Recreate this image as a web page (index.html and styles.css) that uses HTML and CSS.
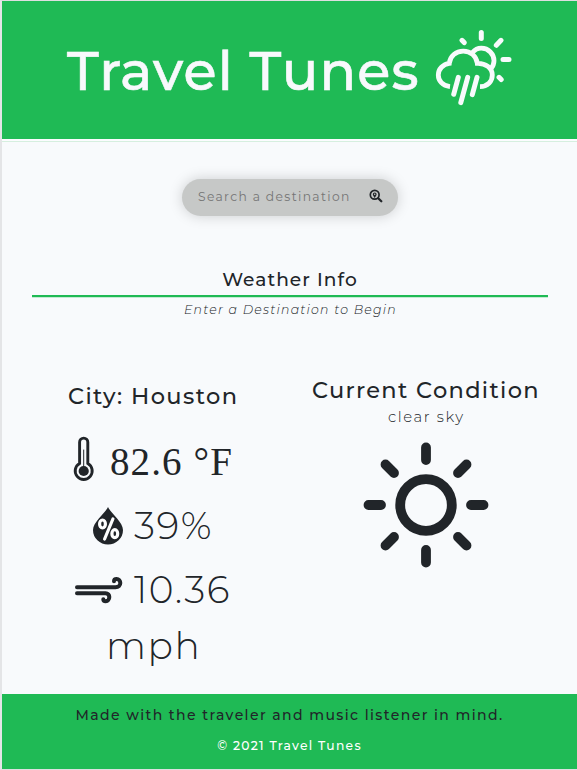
FILE: index.html
```
<!DOCTYPE html>
<html lang="en">
<head>
<meta charset="utf-8">
<title>Travel Tunes</title>
<link rel="stylesheet" href="styles.css">
</head>
<body>
<div class="page">
  <header class="header">
    <h1 class="title">Travel Tunes</h1>
    <svg class="logo" viewBox="0 0 80 80">
      <path d="M16 58.6C8.500 57.800 4.300 52.800 4.300 47C4.300 41 9 36.200 15.300 35.300C16 28 22 23.200 29.300 23.200C36.500 23.200 42.500 28 43.300 35.300C51.500 35 58.300 40 58.300 47C58.300 53.500 53.500 58.600 46 58.600"/>
      <path d="M38.500 24.500C41 21.500 44 20.200 47.300 20.200C54.500 20.200 60 26 60 32.700C60 36 59 38.500 56.700 41"/>
      <path class="rays" d="M47.300 4.500V10.500M67 12.300L62.300 17.300M69 31.400H75M28 12.300L30.200 14.600M65 49.300L67.200 51.500M24.300 49.300L19.700 66.300M33.700 49.300L26.800 74.600M43 49.300L38.300 66.700"/>
    </svg>
  </header>
  <main class="main">
    <form class="search">
      <input class="search-input" type="text" placeholder="Search a destination">
      <svg class="search-icon" viewBox="0 0 14 14">
        <circle cx="5.700" cy="5.800" r="4.400"/>
        <path class="handle" d="M9.200 9.200L12.300 12.300"/>
        <path class="pin" fill-rule="evenodd" d="M5.700 9C4.500 7.300 3.800 6.300 3.800 5.300A1.900 1.900 0 0 1 7.600 5.300C7.600 6.300 6.900 7.300 5.700 9ZM5.700 4.600A.7.7 0 1 0 5.700 6A.7.700 0 1 0 5.700 4.600Z"/>
      </svg>
    </form>
    <h2 class="section-title">Weather Info</h2>
    <p class="hint">Enter a Destination to Begin</p>
    <div class="columns">
      <section class="city">
        <h3 class="city-name">City: Houston</h3>
        <div class="stat temp">
          <svg class="thermo" viewBox="0 0 22 46">
            <path d="M6.600 27.500V6.200A4.100 4.100 0 0 1 14.800 6.200V27.500A8.500 8.500 0 1 1 6.600 27.500Z"/>
            <path class="mercury" d="M10.700 14V35"/>
            <circle class="bulb" cx="10.700" cy="35" r="5.100"/>
          </svg>
          <span class="temp-value">82.6 °F</span>
        </div>
        <div class="stat humidity">
          <svg class="drop" viewBox="0 0 30 38">
            <path class="drop-body" d="M15 0C12 6.500 0 15 0 23A15 14.500 0 0 0 30 23C30 15 18 6.500 15 0Z"/>
            <path class="percent" d="M19.900 12L11.600 32"/>
            <ellipse class="percent" cx="9.500" cy="17" rx="2.900" ry="4"/>
            <ellipse class="percent" cx="21.800" cy="26.700" rx="2.900" ry="4"/>
          </svg>
          <span class="stat-value">39%</span>
        </div>
        <div class="stat wind">
          <svg class="wind-icon" viewBox="0 0 48 27">
            <path d="M2 10.200H40.500C43.500 10.200 45.300 8.300 45.300 6C45.300 3.600 43.700 2 41.600 2C40 2 39 3 39 4.300"/>
            <path d="M2 16.200H30.500C33 16.200 34.300 18 34.300 20C34.300 22.500 32.800 24.200 30.800 24.200C29.300 24.200 28.300 23.400 28.300 22.200"/>
          </svg>
          <span class="stat-value speed">10.36</span>
        </div>
        <div class="stat unit"><span class="stat-value mph">mph</span></div>
      </section>
      <section class="condition">
        <h3 class="condition-title">Current Condition</h3>
        <p class="sky">clear sky</p>
        <svg class="sun" viewBox="-63 -63 126 126">
          <circle r="25.800"/>
          <path d="M0-57.500V-45M0 45V57.500M-57.500 0H-45M45 0H57.500M-40.500-40.500L-32-32M40.500-40.500L32-32M-40.500 40.500L-32 32M40.500 40.500L32 32"/>
        </svg>
      </section>
    </div>
  </main>
  <footer class="footer">
    <p class="tagline">Made with the traveler and music listener in mind.</p>
    <p class="copyright">© 2021 Travel Tunes</p>
  </footer>
</div>
</body>
</html>
```
FILE: styles.css
```
* { box-sizing: border-box; }
body {
  margin: 0;
  background: #fff;
  color: #212529;
  font-family: Montserrat, Inter, sans-serif;
}
h1, h2, h3, p { margin: 0; white-space: nowrap; }
svg { display: block; flex: none; fill: none; stroke: #212529; stroke-linecap: round; }
.page {
  height: 770px;
  overflow: hidden;
  display: flex;
  flex-direction: column;
  border-top: 1px solid #dedfe0;
  border-bottom: 1px solid #dedfe0;
  border-left: 2px solid #e4e5e7;
}
.header {
  height: 138px;
  flex: none;
  display: flex;
  padding: 27px 0 0 63px;
  background: #1fba55;
}
.title {
  width: 369px;
  padding-left: 2px;
  font-size: 54px;
  line-height: 86px;
  font-weight: 500;
  letter-spacing: 1.150px;
  -webkit-text-stroke: .6px #f8f9fc;
  color: #f8f9fc;
}
.logo { width: 80px; height: 80px; stroke: #f8fafc; stroke-width: 4.800; stroke-linecap: butt; }
.rays { stroke-width: 5; stroke-linecap: round; }
.main {
  height: 555px;
  flex: none;
  padding: 37px 29px 0 30px;
  border-top: 2px solid #fbfcfe;
  background: linear-gradient(#d6efdf 1px, #f8fafc 1px);
}
.search {
  display: flex;
  align-items: center;
  width: 216px;
  height: 37px;
  margin: 1px 0 0 150px;
  padding: 0 15px 3px 16px;
  border-radius: 19px;
  background: #c6c8c7;
  box-shadow: 0 0 14px rgba(0, 0, 0, .18);
}
.search-input {
  width: 171px;
  padding: 0;
  border: 0;
  outline: 0;
  background: none;
  font: 400 12.300px Montserrat, Inter, sans-serif;
  letter-spacing: 1.350px;
}
.search-input::placeholder { color: #757575; }
.search-icon { width: 14px; height: 14px; stroke-width: 1.700; }
.handle { stroke-width: 2.300; }
.pin { fill: #212529; stroke: none; }
.section-title {
  height: 30px;
  margin: 51px 0 0;
  font-size: 18.600px;
  line-height: 25px;
  font-weight: 500;
  letter-spacing: 1.050px;
  text-align: center;
  border-bottom: 2px solid #1fba55;
  box-shadow: 0 1px #c5ebd3;
}
.hint {
  padding-left: 1px;
  font-size: 12.500px;
  line-height: 25px;
  font-weight: 300;
  font-style: italic;
  letter-spacing: 1.250px;
  text-align: center;
}
.columns { display: flex; margin-top: 48px; }
.city { width: 251px; }
.city-name {
  margin: 8px 0 0 36px;
  font-size: 22.500px;
  line-height: 36px;
  font-weight: 500;
  letter-spacing: 1.400px;
}
.stat { display: flex; align-items: flex-start; }
.temp { margin: 22px 0 0 41px; height: 70px; }
.thermo { width: 22px; height: 46px; stroke-width: 2.900; }
.mercury { stroke-width: 1; }
.bulb { fill: #212529; stroke: none; }
.temp-value {
  margin-left: 15px;
  font: 39px/52px "Liberation Serif", serif;
  letter-spacing: 1.100px;
  white-space: nowrap;
}
.stat-value { font-size: 37.600px; line-height: 38px; font-weight: 300; letter-spacing: 1.600px; }
.humidity { height: 70px; padding: 1px 0 0 61px; }
.drop { width: 30px; height: 38px; }
.drop-body { fill: #212529; stroke: none; }
.percent { stroke: #fff; stroke-width: 3.200; }
.humidity .stat-value { margin-left: 11px; }
.wind { height: 51px; padding: 1px 0 0 43px; }
.wind-icon { width: 48px; height: 27px; stroke-width: 4; }
.speed { margin: -6px 0 0 11px; }
.unit { padding-left: 74px; }
.condition { width: 265px; }
.condition-title {
  margin: 2px 0 0 29px;
  font-size: 22.500px;
  line-height: 36px;
  font-weight: 500;
  letter-spacing: 1.330px;
}
.sky {
  margin: 0 0 0 105px;
  font-size: 14.900px;
  line-height: 18px;
  font-weight: 300;
  letter-spacing: 1.600px;
}
.sun { width: 126px; height: 126px; margin: 16px 0 0 80px; stroke-width: 9.800; }
.footer {
  flex: 1;
  background: #1fba55;
  text-align: center;
}
.tagline {
  margin-top: 9px;
  font-size: 14px;
  line-height: 25px;
  font-weight: 500;
  letter-spacing: 1.420px;
}
.copyright {
  margin-top: 5px;
  font-size: 12.300px;
  line-height: 25px;
  font-weight: 500;
  letter-spacing: 1.270px;
  color: #fff;
}
```
